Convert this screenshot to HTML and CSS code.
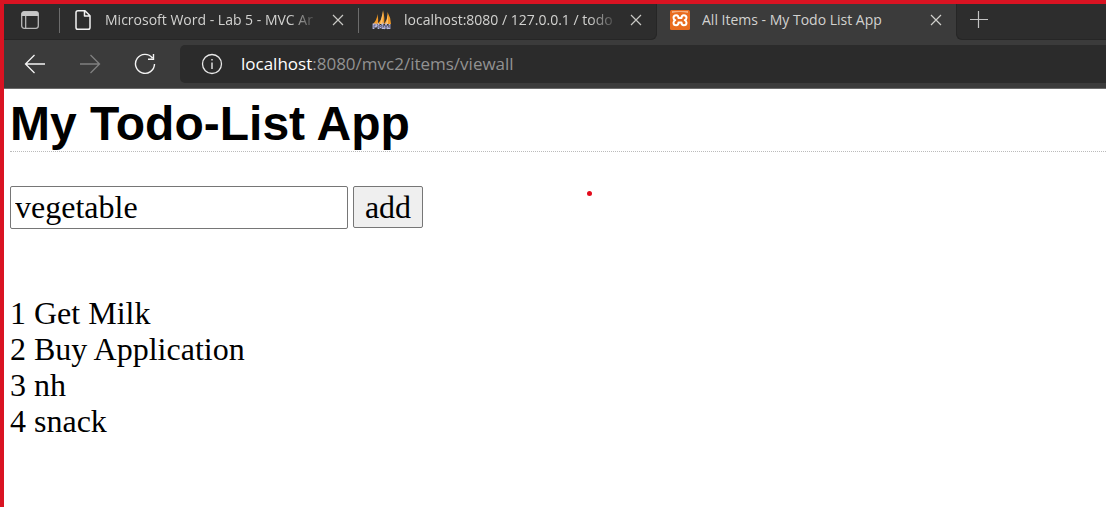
FILE: index.html
```html
<!DOCTYPE html>
<html lang="en">
<head>
<meta charset="utf-8">
<title>All Items - My Todo List App</title>
<link rel="stylesheet" href="styles.css">
</head>
<body>
<header class="browser">
  <div class="tab-strip">
    <div class="strip-start">
      <button class="icon-button" aria-label="Tab actions menu">
        <svg width="20" height="20" viewBox="0 0 20 20"><rect x="1.7" y="1.7" width="16.6" height="16.6" rx="2.5" fill="none" stroke="#b8b8b8" stroke-width="1.3"/><path d="M1.5 6V4Q1.5 1.5 4 1.5H16Q18.500 1.500 18.500 4V6Z" fill="#c8c8c8"/><path d="M5.700 6V18" stroke="#c0c0c0" stroke-width="1.200"/></svg>
      </button>
    </div>
    <div class="tab divided">
      <svg class="favicon" width="20" height="22" viewBox="0 0 20 22"><path d="M5 1.700H12L17 6.700V18.500Q17 20.300 15.200 20.300H4.800Q3 20.300 3 18.500V3.500Q3 1.700 5 1.700ZM11.500 1.700V7H17" fill="none" stroke="#f2f2f2" stroke-width="1.500" stroke-linejoin="round"/></svg>
      <a class="tab-title fade" href="#word">Microsoft Word - Lab 5 - MVC Ar</a>
      <button class="icon-button close" aria-label="Close tab"><svg width="12" height="12" viewBox="0 0 12 12"><path d="M1 1L11 11M11 1L1 11" stroke="#c8c8c4" stroke-width="1.200"/></svg></button>
    </div>
    <div class="tab divided last">
      <svg class="favicon" width="20" height="20" viewBox="0 0 20 20"><path d="M1 14Q5 10 5.500 4Q6.500 9 6 14ZM5.500 14Q11 9 11 0Q13 8 12 14ZM12 14Q16 9 15.500 2Q19 8 19 14Z" fill="#f39a25"/><path d="M8 14L11 1L10.500 14ZM14 14L16 4V14Z" fill="#ffc36c"/><path d="M1.500 19V14.500H4Q5 15 4 16.500H1.500M6.500 19V14.500L8.500 17L10.500 14.500V19M12 19L14 14.500L16 19M12.500 17.500H16M17.500 14V19" fill="none" stroke="#b9b9dc" stroke-width="1.800"/><path d="M2 18V15H3.800M7 18V15L8.500 17L10 15V18M13 18L14 15L15 18M17.800 15V18" fill="none" stroke="#42426b" stroke-width=".7"/></svg>
      <a class="tab-title fade" href="#database">localhost:8080 / 127.0.0.1 / todo</a>
      <button class="icon-button close" aria-label="Close tab"><svg width="12" height="12" viewBox="0 0 12 12"><path d="M1 1L11 11M11 1L1 11" stroke="#c8c8c4" stroke-width="1.200"/></svg></button>
    </div>
    <div class="tab active">
      <svg class="favicon" width="20" height="20" viewBox="0 0 20 20"><rect width="20" height="20" rx="1.500" fill="#e96c20"/><path d="M2 1H18V3Q10 1 2 3Z" fill="#f5ad7d"/><path d="M8.500 8Q8.500 5.200 6.200 5.200Q3.500 5.200 3.500 7.700Q3.500 9.500 5.300 10.200Q3.500 11 3.500 12.800Q3.500 15.300 6.200 15.300Q8.500 15.300 8.500 12.500H11.500Q11.500 15.300 13.800 15.300Q16.500 15.300 16.500 12.800Q16.500 11 14.700 10.200Q16.500 9.500 16.500 7.700Q16.500 5.200 13.800 5.200Q11.500 5.200 11.500 8Z" fill="none" stroke="#fff" stroke-width="2" stroke-linejoin="round"/></svg>
      <a class="tab-title" href="#items">All Items - My Todo List App</a>
      <button class="icon-button close" aria-label="Close tab"><svg width="12" height="12" viewBox="0 0 12 12"><path d="M1 1L11 11M11 1L1 11" stroke="#d0d0cc" stroke-width="1.200"/></svg></button>
    </div>
    <div class="strip-end">
      <button class="icon-button" aria-label="New tab"><svg width="18" height="18" viewBox="0 0 18 18"><path d="M0 8.500H18M8.500 0V17" stroke="#c4c4c4" stroke-width="1.200"/></svg></button>
    </div>
  </div>
  <div class="toolbar">
    <button class="icon-button" aria-label="Back"><svg width="22" height="20" viewBox="0 0 22 20"><path d="M21 10H1.500M10.500 1L1.500 10L10.500 19" fill="none" stroke="#f4f4f4" stroke-width="1.300"/></svg></button>
    <button class="icon-button" aria-label="Forward"><svg width="22" height="20" viewBox="0 0 22 20"><path d="M1 10H20.500M11.500 1L20.500 10L11.500 19" fill="none" stroke="#808080" stroke-width="1.300"/></svg></button>
    <button class="icon-button" aria-label="Refresh"><svg width="22" height="22" viewBox="0 0 22 22"><path d="M18.500 5A9.500 9.500 0 1 0 20.500 11M19.500 1V6.300H14" fill="none" stroke="#f4f4f4" stroke-width="1.400"/></svg></button>
    <div class="address">
      <svg width="22" height="22" viewBox="0 0 22 22"><circle cx="11" cy="11" r="9.500" fill="none" stroke="#e8e8e8" stroke-width="1.300"/><path d="M11 9.500V16M11 6V7.500" stroke="#e8e8e8" stroke-width="1.400"/></svg>
      <a class="url" href="#items"><span class="host">localhost</span>:8080/mvc2/items/viewall</a>
    </div>
  </div>
</header>
<main class="page">
  <h1 class="heading">My Todo-List App</h1>
  <form class="add-form">
    <input class="todo-input" type="text" value="vegetable" aria-label="Todo item">
    <button class="add-button" type="button">add</button>
  </form>
  <div class="items">
    <div>1 Get Milk</div>
    <div>2 Buy Application</div>
    <div>3 nh</div>
    <div>4 snack</div>
  </div>
  <span class="pointer-dot"></span>
</main>
</body>
</html>
```

FILE: styles.css
```css
* {
  box-sizing: border-box;
}

body {
  margin: 0;
  min-height: 100vh;
  border-top: 4px solid #d91322;
  border-left: 4px solid #d91322;
  background: #fff;
  color: #000;
  font-family: Georgia, "Liberation Serif", serif;
  font-size: 32px;
  line-height: 36px;
}

.browser {
  background: #3b3b3b;
  border-bottom: 1px solid #6b6b6b;
  font-family: "Segoe UI", "Open Sans", sans-serif;
}

.icon-button {
  display: flex;
  flex: none;
  padding: 0;
  border: 0;
  background: none;
}

svg {
  display: block;
  flex: none;
}

.tab-strip {
  display: flex;
  height: 36px;
}

.strip-start,
.strip-end,
.tab {
  display: flex;
  align-items: center;
  background: #2d2d2d;
  border-bottom: 1px solid #262626;
  padding-bottom: 3px;
}

.strip-start {
  flex: none;
  width: 55px;
  padding-left: 16px;
}

.tab {
  position: relative;
  flex: 0 1 299px;
  min-width: 0;
  gap: 12px;
  padding-left: 14px;
  padding-right: 14px;
}

.divided::before {
  content: "";
  position: absolute;
  left: 0;
  top: 4px;
  width: 1px;
  height: 25px;
  background: #6c6c6c;
}

.last {
  border-right: 1px solid #262626;
  border-bottom-right-radius: 6px;
}

.active {
  padding-left: 13px;
  background: #3b3b3b;
  border-bottom-color: #3b3b3b;
}

.tab-title {
  flex: 0 1 auto;
  min-width: 0;
  overflow: hidden;
  color: #d2d2d0;
  font-size: 14px;
  line-height: 20px;
  text-decoration: none;
  white-space: nowrap;
}

.close {
  margin-left: auto;
}

.fade {
  -webkit-mask-image: linear-gradient(to right, #000 calc(100% - 24px), rgba(0, 0, 0, 0.2));
  mask-image: linear-gradient(to right, #000 calc(100% - 24px), rgba(0, 0, 0, 0.2));
}

.strip-end {
  flex: 1;
  padding-left: 13px;
  border-left: 1px solid #262626;
  border-bottom-left-radius: 6px;
}

.toolbar {
  display: flex;
  align-items: center;
  gap: 33px;
  height: 48px;
  padding-left: 20px;
}

.address {
  display: flex;
  flex: 1;
  align-items: center;
  gap: 18px;
  height: 38px;
  margin-left: -9px;
  padding-left: 21px;
  border-radius: 5px 0 0 5px;
  background: #2b2b2b;
}

.url {
  color: #929292;
  font-size: 17px;
  line-height: 24px;
  text-decoration: none;
}

.host {
  color: #fff;
}

.page {
  position: relative;
  padding: 8px 0 0 6px;
}

.heading {
  margin: 0 0 34px;
  border-bottom: 1px dotted #bbb;
  font-family: Arial, "Liberation Sans", sans-serif;
  font-size: 48px;
  line-height: 54px;
}

.add-form {
  display: flex;
  align-items: flex-start;
  gap: 5px;
  margin-bottom: 66px;
}

.todo-input,
.add-button {
  border: 1px solid #767676;
  border-radius: 2px;
  color: #000;
  font: inherit;
}

.todo-input {
  width: 338px;
  height: 43px;
  padding: 1px 4px;
  background: #fff;
}

.add-button {
  width: 70px;
  height: 42px;
  padding: 1px 6px;
  background: #efefef;
}

.pointer-dot {
  position: absolute;
  left: 583px;
  top: 102px;
  width: 5px;
  height: 5px;
  border-radius: 50%;
  background: #e30b1c;
}
```
